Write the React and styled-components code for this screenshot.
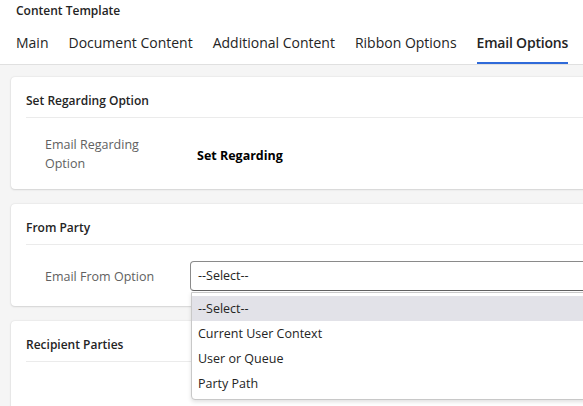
import styled, { createGlobalStyle } from 'styled-components';

const GlobalStyle = createGlobalStyle`
  html, body {
    margin: 0;
    padding: 0;
  }
  body {
    font-family: "Open Sans", "Noto Sans", sans-serif;
    color: #242424;
  }
`;

const tabs = ['Main', 'Document Content', 'Additional Content', 'Ribbon Options', 'Email Options'];
const fromOptions = ['--Select--', 'Current User Context', 'User or Queue', 'Party Path'];

const App = () => {
  return (
    <>
      <GlobalStyle />
      <Page>
        <Header>
          <FormTitle>Content Template</FormTitle>
          <TabList>
            {tabs.map(tab => (
              <Tab key={tab} active={tab === 'Email Options'}>
                {tab}
              </Tab>
            ))}
          </TabList>
        </Header>

        <Body>
          <Card>
            <CardTitle>Set Regarding Option</CardTitle>
            <FieldRow>
              <FieldLabel>Email Regarding Option</FieldLabel>
              <FieldValue>Set Regarding</FieldValue>
            </FieldRow>
          </Card>

          <Card>
            <CardTitle>From Party</CardTitle>
            <FieldRow>
              <FieldLabel>Email From Option</FieldLabel>
              <SelectWrap>
                <SelectBox>--Select--</SelectBox>
                <OptionList>
                  {fromOptions.map((opt, i) => (
                    <Option key={opt} selected={i === 0}>
                      {opt}
                    </Option>
                  ))}
                </OptionList>
              </SelectWrap>
            </FieldRow>
          </Card>

          <Card>
            <CardTitle>Recipient Parties</CardTitle>
            <EmptyRow />
          </Card>
        </Body>
      </Page>
    </>
  );
};

const Page = styled.div`
  width: 583px;
  height: 406px;
  overflow: hidden;
  background: #f5f5f5;
  display: flex;
  flex-direction: column;
`;

const Header = styled.div`
  background: #ffffff;
  border-bottom: 1px solid #e0e0e0;
  padding: 0 16px;
`;

const FormTitle = styled.div`
  font-size: 12px;
  font-weight: 600;
  line-height: 16px;
  padding-top: 3px;
`;

const TabList = styled.div`
  display: flex;
  gap: 20px;
  margin-top: 9px;
`;

const Tab = styled.div`
  font-size: 14px;
  line-height: 20px;
  padding: 5px 0 9px;
  white-space: nowrap;
  letter-spacing: ${props => (props.active ? '-0.2px' : '0')};
  font-weight: ${props => (props.active ? 600 : 400)};
  color: #242424;
  border-bottom: 2px solid ${props => (props.active ? '#2f6ad9' : 'transparent')};
`;

const Body = styled.div`
  padding: 12px 0 0 11px;
  display: flex;
  flex-direction: column;
  gap: 15px;
`;

const Card = styled.div`
  width: 640px;
  background: #ffffff;
  border-radius: 4px;
  box-shadow: 0 0 2px rgba(0, 0, 0, 0.12), 0 1px 2px rgba(0, 0, 0, 0.1);
  padding: 0 15px;
  flex-shrink: 0;
`;

const CardTitle = styled.div`
  font-size: 12px;
  font-weight: 600;
  line-height: 18px;
  padding: 15px 0 7px;
  border-bottom: 1px solid #ebebeb;
`;

const FieldRow = styled.div`
  display: grid;
  grid-template-columns: 110px 1fr;
  column-gap: 35px;
  align-items: center;
  padding: 16px 0 15px 19px;
`;

const FieldLabel = styled.div`
  font-size: 12.5px;
  line-height: 19px;
  padding: 1px 0;
  color: #616161;
`;

const FieldValue = styled.div`
  font-size: 12.5px;
  font-weight: 700;
  color: #000000;
  padding: 3px 0 0 7px;
`;

const SelectWrap = styled.div`
  position: relative;
`;

const SelectBox = styled.div`
  height: 28px;
  border: 1px solid #8a8a8a;
  border-bottom-color: #616161;
  border-radius: 4px;
  font-size: 12.5px;
  line-height: 28px;
  padding-left: 7px;
  color: #242424;
`;

const OptionList = styled.div`
  position: absolute;
  top: calc(100% + 1px);
  left: 1px;
  right: 0;
  z-index: 2;
  background: #ffffff;
  border: 1px solid #c8c8c8;
  border-radius: 0 0 4px 4px;
  box-shadow: 0 2px 4px rgba(0, 0, 0, 0.12);
  padding: 3px 0 3px;
`;

const Option = styled.div`
  height: 25px;
  line-height: 25px;
  padding-left: 6px;
  font-size: 12.5px;
  color: #242424;
  background: ${props => (props.selected ? '#e2e2e8' : 'transparent')};
`;

const EmptyRow = styled.div`
  height: 60px;
`;

export default App;
